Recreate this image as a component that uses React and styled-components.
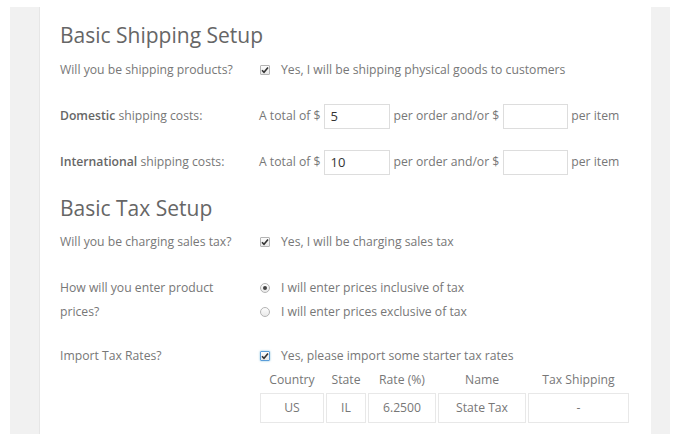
import React from 'react';
import styled, { createGlobalStyle } from 'styled-components';

const GlobalStyle = createGlobalStyle`
  html, body {
    margin: 0;
    padding: 0;
    background: #fff;
    overflow: hidden;
  }
  body {
    font-family: 'Open Sans', 'Noto Sans', sans-serif;
    font-size: 12.2px;
    color: #777;
  }
`;

const Frame = styled.div`
  margin: 7px 0 0 10px;
  width: 660px;
  min-height: 440px;
  background: #f1f1f1;
  padding: 0 19px 0 29px;
  box-sizing: border-box;
  display: flex;
`;

const Panel = styled.div`
  flex: 1;
  background: #fff;
  border-left: 1px solid #e6e6e6;
  padding: 12px 0 20px 20px;
`;

const Heading = styled.h2`
  margin: ${({ $top }) => $top || 0}px 0 ${({ $bottom }) => $bottom || 5}px;
  font-size: 21px;
  line-height: 32px;
  font-weight: 400;
  color: #666;
`;

const Row = styled.div`
  display: flex;
  align-items: ${({ $align }) => $align || 'center'};
  min-height: 26px;
  margin-bottom: ${({ $gap }) => ($gap === undefined ? 20 : $gap)}px;
`;

const Label = styled.div`
  width: 185px;
  margin-right: 14px;
  flex-shrink: 0;
  line-height: 24px;
  color: #777;

  strong {
    font-weight: 600;
    color: #666;
  }
`;

const Field = styled.div`
  display: flex;
  flex-direction: ${({ $column }) => ($column ? 'column' : 'row')};
  align-items: ${({ $column }) => ($column ? 'flex-start' : 'center')};
  line-height: 24px;
`;

const Option = styled.label`
  display: flex;
  align-items: center;
  gap: 11px;
  padding-left: 1px;
`;

const Box = styled.span`
  width: 10px;
  height: 10px;
  box-sizing: border-box;
  border: 1px solid ${({ $focus }) => ($focus ? '#5b9dd9' : '#b4b4b4')};
  border-radius: 1px;
  background: linear-gradient(#fdfdfd, #e9e9e9);
  box-shadow: ${({ $focus }) => ($focus ? '0 0 2px rgba(30,140,190,.6)' : 'none')};
  display: inline-flex;
  align-items: center;
  justify-content: center;
`;

const Radio = styled.span`
  width: 10px;
  height: 10px;
  box-sizing: border-box;
  border: 1px solid #b4b4b4;
  border-radius: 50%;
  background: linear-gradient(#fdfdfd, #e9e9e9);
  display: inline-flex;
  align-items: center;
  justify-content: center;

  &::after {
    content: '';
    width: 4px;
    height: 4px;
    border-radius: 50%;
    background: ${({ $on }) => ($on ? '#444' : 'transparent')};
  }
`;

const Input = styled.input`
  width: ${({ $w }) => $w}px;
  height: 25px;
  box-sizing: border-box;
  border: 1px solid #ddd;
  padding: 0 5px;
  margin: 0 3px 0 4px;
  font-family: inherit;
  font-size: 13px;
  color: #333;
  outline: none;
`;

const RateTable = styled.table`
  border-collapse: separate;
  border-spacing: 2px;
  margin-left: -1px;
  margin-top: -1px;
  font-size: 12.2px;
`;

const Th = styled.th`
  font-weight: 400;
  color: #777;
  padding: 0;
  height: 22px;
  line-height: 22px;
  text-align: center;
`;

const Td = styled.td`
  border: 1px solid #e8e8e8;
  height: 28px;
  padding: 0;
  text-align: center;
  color: #777;
  width: ${({ $w }) => $w}px;
`;

const Check = ({ focus }) => (
  <Box $focus={focus}>
    <svg width="8" height="8" viewBox="0 0 8 8">
      <path d="M1 4.2 L3 6.3 L7 1.5" fill="none" stroke="#333" strokeWidth="1.6" />
    </svg>
  </Box>
);

const rates = [{ country: 'US', state: 'IL', rate: '6.2500', name: 'State Tax', shipping: '-' }];

export default function App() {
  return (
    <>
      <GlobalStyle />
      <Frame>
        <Panel>
          <Heading $bottom={6}>Basic Shipping Setup</Heading>
          <Row>
            <Label>Will you be shipping products?</Label>
            <Field>
              <Option>
                <Check />
                Yes, I will be shipping physical goods to customers
              </Option>
            </Field>
          </Row>
          <Row>
            <Label>
              <strong>Domestic</strong> shipping costs:
            </Label>
            <Field>
              A total of $<Input $w={66} defaultValue="5" />
              per order and/or $<Input $w={65} defaultValue="" />
              per item
            </Field>
          </Row>
          <Row $gap={0}>
            <Label>
              <strong>International</strong> shipping costs:
            </Label>
            <Field>
              A total of $<Input $w={66} defaultValue="10" />
              per order and/or $<Input $w={65} defaultValue="" />
              per item
            </Field>
          </Row>

          <Heading $top={17}>Basic Tax Setup</Heading>
          <Row $gap={21}>
            <Label>Will you be charging sales tax?</Label>
            <Field>
              <Option>
                <Check />
                Yes, I will be charging sales tax
              </Option>
            </Field>
          </Row>
          <Row $align="flex-start">
            <Label>How will you enter product prices?</Label>
            <Field $column>
              <Option>
                <Radio $on />
                I will enter prices inclusive of tax
              </Option>
              <Option>
                <Radio />
                I will enter prices exclusive of tax
              </Option>
            </Field>
          </Row>
          <Row $align="flex-start" $gap={0}>
            <Label>Import Tax Rates?</Label>
            <Field $column>
              <Option>
                <Check focus />
                Yes, please import some starter tax rates
              </Option>
              <RateTable>
                <thead>
                  <tr>
                    <Th>Country</Th>
                    <Th>State</Th>
                    <Th>Rate (%)</Th>
                    <Th>Name</Th>
                    <Th>Tax Shipping</Th>
                  </tr>
                </thead>
                <tbody>
                  {rates.map((r) => (
                    <tr key={r.name}>
                      <Td $w={62}>{r.country}</Td>
                      <Td $w={38}>{r.state}</Td>
                      <Td $w={66}>{r.rate}</Td>
                      <Td $w={86}>{r.name}</Td>
                      <Td $w={99}>{r.shipping}</Td>
                    </tr>
                  ))}
                </tbody>
              </RateTable>
            </Field>
          </Row>
        </Panel>
      </Frame>
    </>
  );
}
